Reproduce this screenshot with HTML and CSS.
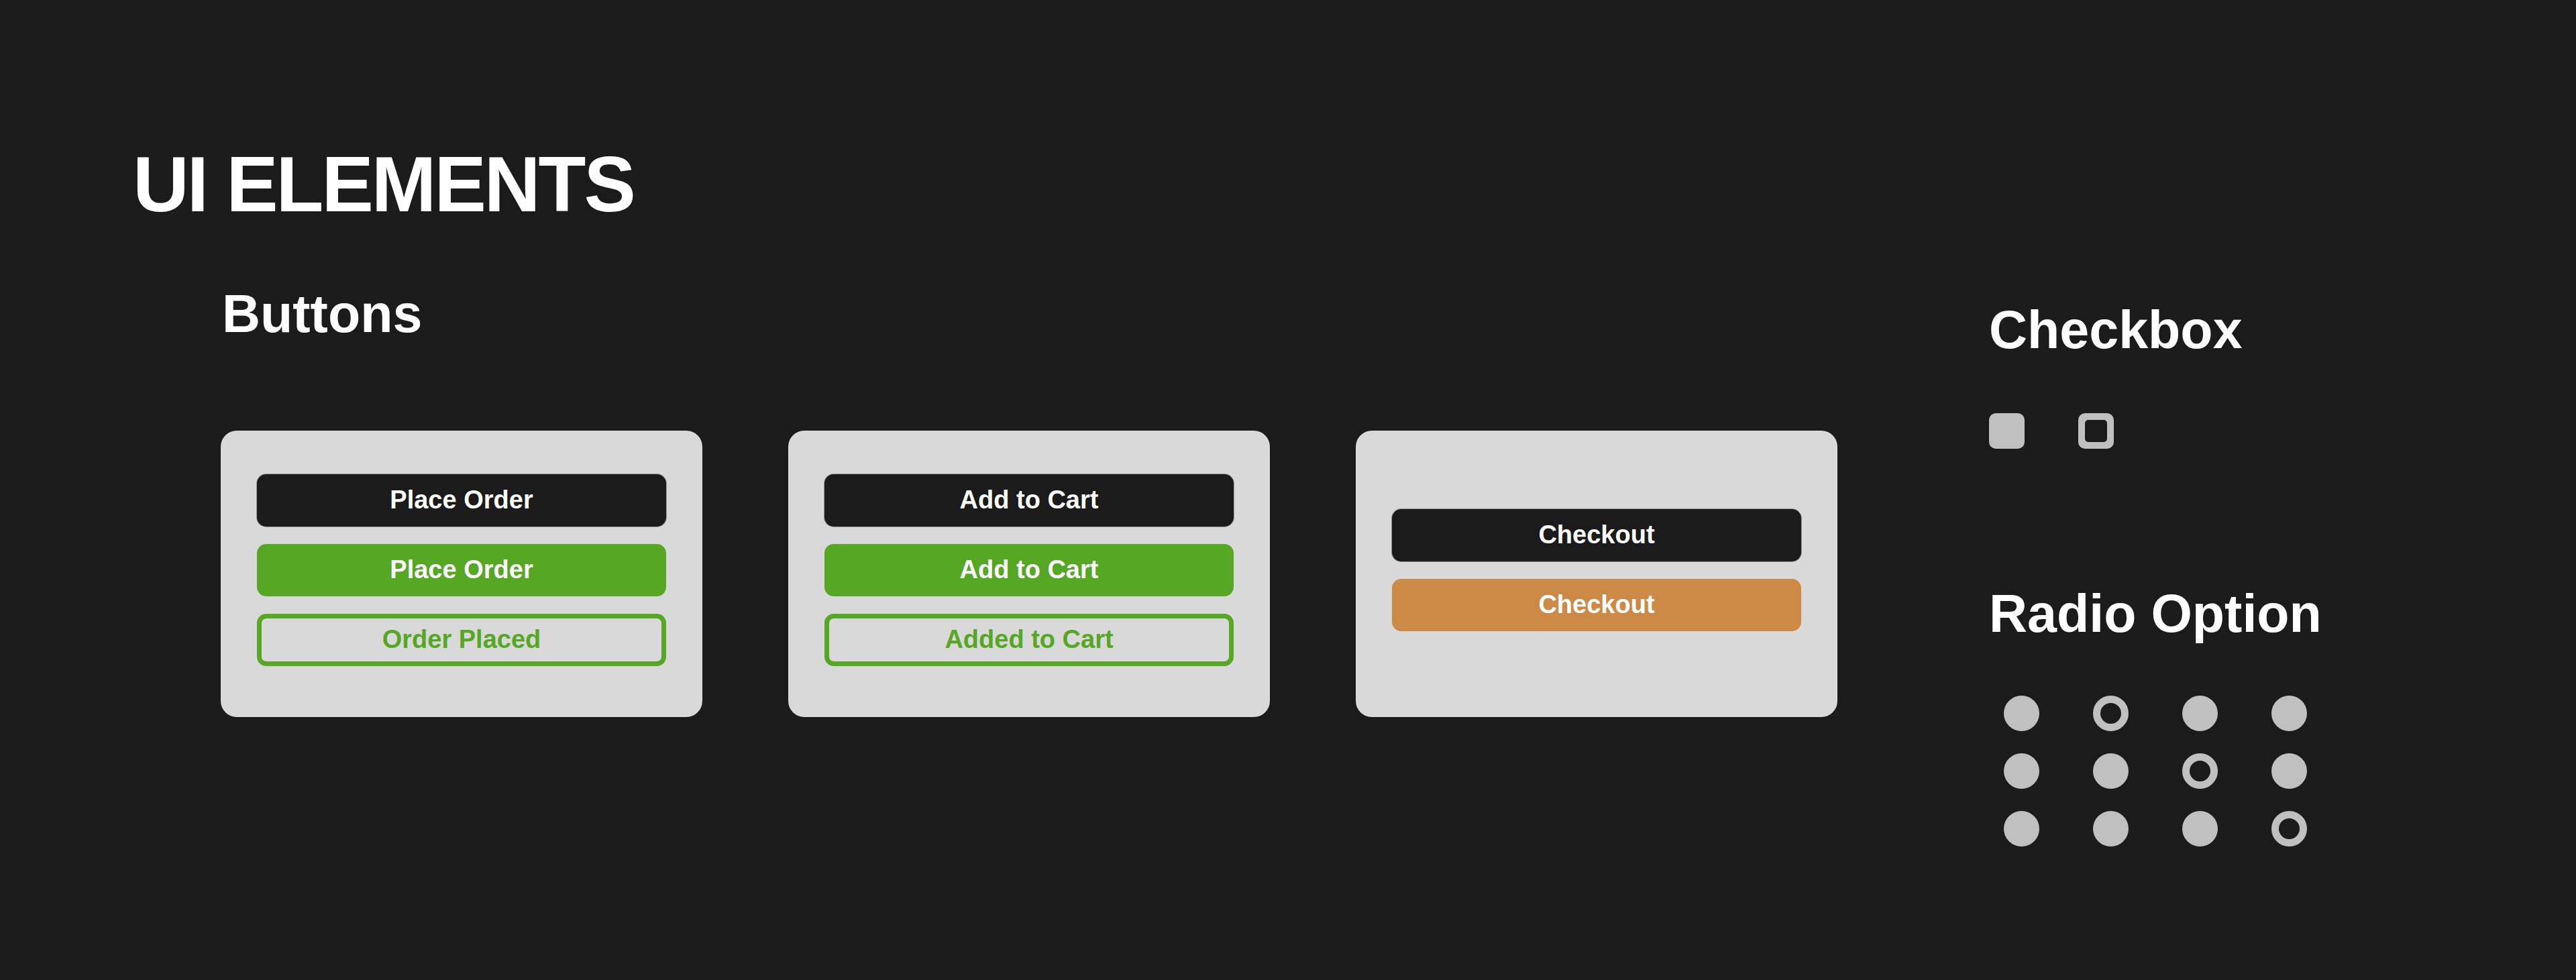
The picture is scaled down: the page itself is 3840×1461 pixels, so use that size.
FILE: index.html
```html
<!DOCTYPE html>
<html lang="en">
<head>
<meta charset="utf-8">
<title>UI Elements</title>
<link rel="stylesheet" href="styles.css">
</head>
<body>
<div class="page">
  <h1 class="title">UI ELEMENTS</h1>
  <div class="content">
    <section class="buttons-section">
      <h2 class="heading">Buttons</h2>
      <div class="cards">
        <div class="card">
          <div class="btn btn-dark">Place Order</div>
          <div class="btn btn-green">Place Order</div>
          <div class="btn btn-outline">Order Placed</div>
        </div>
        <div class="card">
          <div class="btn btn-dark">Add to Cart</div>
          <div class="btn btn-green">Add to Cart</div>
          <div class="btn btn-outline">Added to Cart</div>
        </div>
        <div class="card">
          <div class="btn btn-dark">Checkout</div>
          <div class="btn btn-orange">Checkout</div>
        </div>
      </div>
    </section>
    <aside class="controls">
      <section class="checkbox-section">
        <h2 class="heading">Checkbox</h2>
        <div class="checkboxes">
          <span class="checkbox"></span>
          <span class="checkbox checkbox-checked"><span class="checkbox-inner"></span></span>
        </div>
      </section>
      <section class="radio-section">
        <h2 class="heading">Radio Option</h2>
        <div class="radio-grid">
          <span class="radio"></span>
          <span class="radio radio-on"></span>
          <span class="radio"></span>
          <span class="radio"></span>
          <span class="radio"></span>
          <span class="radio"></span>
          <span class="radio radio-on"></span>
          <span class="radio"></span>
          <span class="radio"></span>
          <span class="radio"></span>
          <span class="radio"></span>
          <span class="radio radio-on"></span>
        </div>
      </section>
    </aside>
  </div>
</div>
</body>
</html>
```

FILE: styles.css
```css
* {
  box-sizing: border-box;
}

html, body {
  margin: 0;
  padding: 0;
  background: #1b1b1b;
}

body {
  font-family: "Liberation Sans", Arial, sans-serif;
  color: #ffffff;
  width: 3840px;
  height: 1461px;
  overflow: hidden;
}

.page {
  padding: 217px 0 0 198px;
}

.title {
  margin: 0;
  font-size: 116px;
  line-height: 1;
  font-weight: 700;
  letter-spacing: -3px;
  color: #ffffff;
}

.content {
  display: flex;
  align-items: flex-start;
  padding-left: 131px;
  margin-top: 95px;
}

.buttons-section {
  width: 2636px;
  flex: none;
}

.heading {
  margin: 0;
  font-size: 79px;
  line-height: 1;
  font-weight: 700;
  color: #ffffff;
}

.buttons-section .heading {
  padding-left: 2px;
}

.cards {
  display: flex;
  gap: 128px;
  margin-top: 135px;
}

.card {
  width: 718px;
  height: 427px;
  background: #d9d9d9;
  border-radius: 24px;
  padding: 0 54px 12px;
  display: flex;
  flex-direction: column;
  justify-content: center;
  gap: 26px;
}

.btn {
  height: 78px;
  border-radius: 14px;
  display: flex;
  align-items: center;
  justify-content: center;
  font-size: 38px;
  font-weight: 700;
  color: #ffffff;
}

.btn-dark {
  background: #1b1b1b;
  box-shadow: 0 0 0 1px #9a9a9a;
}

.btn-green {
  background: #55a724;
}

.btn-orange {
  background: #cd8946;
}

.btn-outline {
  background: transparent;
  border: 7px solid #55a724;
  color: #55a724;
}

.controls {
  display: flex;
  flex-direction: column;
  margin-top: 24px;
}

.checkboxes {
  display: flex;
  gap: 80px;
  margin-top: 85px;
}

.checkbox {
  width: 53px;
  height: 53px;
  border-radius: 10px;
  background: #c0c0c0;
  display: flex;
  align-items: center;
  justify-content: center;
}

.checkbox-inner {
  width: 33px;
  height: 33px;
  border-radius: 5px;
  background: #1b1b1b;
}

.radio-section {
  margin-top: 206px;
}

.radio-grid {
  display: grid;
  grid-template-columns: repeat(4, 53px);
  column-gap: 80px;
  row-gap: 33px;
  margin-top: 83px;
  padding-left: 22px;
}

.radio {
  width: 53px;
  height: 53px;
  border-radius: 50%;
  background: #c0c0c0;
}

.radio-on {
  background: #1b1b1b;
  border: 11px solid #c0c0c0;
}
```
